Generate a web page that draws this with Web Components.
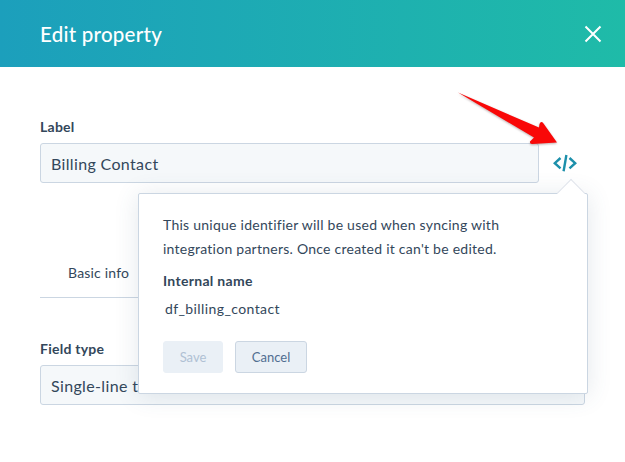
<!DOCTYPE html>
<html>
<head>
<meta charset="utf-8">
<title>Edit property</title>
<style>
  html, body { margin: 0; height: 100%; background: #fff; overflow: hidden; }
  body { font-family: Lato, "Open Sans", sans-serif; color: #33475b; }
</style>
</head>
<body>
<edit-dialog heading="Edit property">
  <form-field label="Label" value="Billing Contact" style="margin-top:51px">
    <code-button></code-button>
  </form-field>
  <tab-row style="margin-top:72px"></tab-row>
  <form-field label="Field type" value="Single-line text" style="margin-top:42px"></form-field>
  <name-popover></name-popover>
  <red-arrow></red-arrow>
</edit-dialog>

<script>
class EditDialog extends HTMLElement {
  constructor() {
    super();
    this.attachShadow({ mode: "open" });
    const heading = this.getAttribute("heading") || "";
    this.shadowRoot.innerHTML = `
      <style>
      :host { display: block; position: relative; width: 625px; height: 462px; overflow: hidden; }
      .head {
        height: 67px;
        box-sizing: border-box;
        padding: 0 22px 0 40px;
        display: flex;
        align-items: center;
        justify-content: space-between;
        background: linear-gradient(90deg, #1c9fbc 0%, #1fbba8 100%);
        color: #fff;
      }
      h2 { margin: 0; font-size: 20.5px; font-weight: 500; letter-spacing: .25px; }
      svg { display: block; }
      .body { padding: 0 40px; }
      </style>
      <div class="head">
        <h2>${heading}</h2>
        <svg width="20" height="20" viewBox="0 0 20 20" fill="none" stroke="#fff" stroke-width="2">
          <path d="M2.5 2.5 17.5 17.5M17.5 2.5 2.5 17.5"/>
        </svg>
      </div>
      <div class="body"><slot></slot></div>
    `;
  }
}

class FormField extends HTMLElement {
  constructor() {
    super();
    this.attachShadow({ mode: "open" });
    const label = this.getAttribute("label") || "";
    const value = this.getAttribute("value") || "";
    this.shadowRoot.innerHTML = `
      <style>
      :host { display: block; }
      label { display: block; font-size: 14px; font-weight: 700; line-height: 18px; margin-bottom: 7px; letter-spacing: .25px; }
      .row { display: flex; align-items: center; }
      .input {
        flex: 1;
        height: 40px;
        box-sizing: border-box;
        padding: 0 10px;
        display: flex;
        align-items: center;
        background: #f5f8fa;
        border: 1px solid #cbd6e2;
        border-radius: 3px;
        font-size: 16px;
        letter-spacing: .35px;
        white-space: nowrap;
      }
      </style>
      <label>${label}</label>
      <div class="row">
        <div class="input">${value}</div>
        <slot></slot>
      </div>
    `;
  }
}

class CodeButton extends HTMLElement {
  constructor() {
    super();
    this.attachShadow({ mode: "open" });
    this.shadowRoot.innerHTML = `
      <style>
      :host { display: block; width: 46px; flex: none; }
      svg { display: block; margin-left: 14px; }
      </style>
      <svg width="24" height="18" viewBox="0 0 24 18" fill="none" stroke="#1d90ab" stroke-width="2.4">
        <path d="M7.5 4 1.8 9.2 7.5 14.4M16.5 4 22.2 9.2 16.5 14.4"/>
        <path d="M13.4 1 10.6 17.2"/>
      </svg>
    `;
  }
}

class TabRow extends HTMLElement {
  constructor() {
    super();
    this.attachShadow({ mode: "open" });
    this.shadowRoot.innerHTML = `
      <style>
      :host { display: block; border-bottom: 1px solid #cbd6e2; height: 42px; box-sizing: content-box; }
      span { display: block; padding: 8px 0 0 28px; font-size: 14px; line-height: 20px; letter-spacing: .2px; }
      </style>
      <span>Basic info</span>
    `;
  }
}

class NamePopover extends HTMLElement {
  constructor() {
    super();
    this.attachShadow({ mode: "open" });
    this.shadowRoot.innerHTML = `
      <style>
      :host {
        display: block;
        position: absolute;
        left: 138px;
        top: 193px;
        width: 450px;
        height: 201px;
        box-sizing: border-box;
        padding: 19px 24px;
        background: #fff;
        border: 1px solid #cbd6e2;
        border-radius: 2px;
        box-shadow: 0 2px 24px rgba(66, 91, 118, .14);
        font-size: 14px;
      }
      .tip {
        position: absolute;
        right: 6px;
        top: -11px;
        width: 20px;
        height: 20px;
        transform: rotate(45deg);
        background: #fff;
        border-left: 1px solid #dfe3eb;
        border-top: 1px solid #dfe3eb;
        box-sizing: border-box;
      }
      p { margin: 0; line-height: 24px; position: relative; letter-spacing: .25px; }
      h4 { margin: 10px 0 0; font-size: 14px; font-weight: 700; line-height: 20px; letter-spacing: .3px; }
      .name { margin: 8px 0 0 2px; line-height: 20px; letter-spacing: .4px; }
      .actions { display: flex; gap: 12px; margin-top: 22px; }
      button {
        height: 32px;
        box-sizing: border-box;
        border-radius: 3px;
        font: inherit;
        font-size: 13px;
        padding: 0;
      }
      .save { width: 60px; background: #eaf0f6; border: 1px solid #eaf0f6; color: #b0c1d4; }
      .cancel { width: 72px; background: #eaf0f6; border: 1px solid #cbd6e2; color: #506e91; }
      </style>
      <div class="tip"></div>
      <p>This unique identifier will be used when syncing with<br>integration partners. Once created it can't be edited.</p>
      <h4>Internal name</h4>
      <div class="name">df_billing_contact</div>
      <div class="actions">
        <button class="save">Save</button>
        <button class="cancel">Cancel</button>
      </div>
    `;
  }
}

class RedArrow extends HTMLElement {
  constructor() {
    super();
    this.attachShadow({ mode: "open" });
    this.shadowRoot.innerHTML = `
      <style>
      :host { display: block; position: absolute; left: 455px; top: 88px; width: 125px; height: 60px; }
      svg { display: block; filter: drop-shadow(0 1px 1px rgba(60, 20, 20, .35)); }
      </style>
      <svg width="125" height="60" viewBox="0 0 125 60">
        <path d="M3 4.5 84 39.5 84.5 36 Q86 32.5 88.5 35.5 L102 54.5 L77 56 Q74.5 56 75 53.5 L79 49.5 Z" fill="#f90808"/>
      </svg>
    `;
  }
}

customElements.define("edit-dialog", EditDialog);
customElements.define("form-field", FormField);
customElements.define("code-button", CodeButton);
customElements.define("tab-row", TabRow);
customElements.define("name-popover", NamePopover);
customElements.define("red-arrow", RedArrow);
</script>
</body>
</html>
